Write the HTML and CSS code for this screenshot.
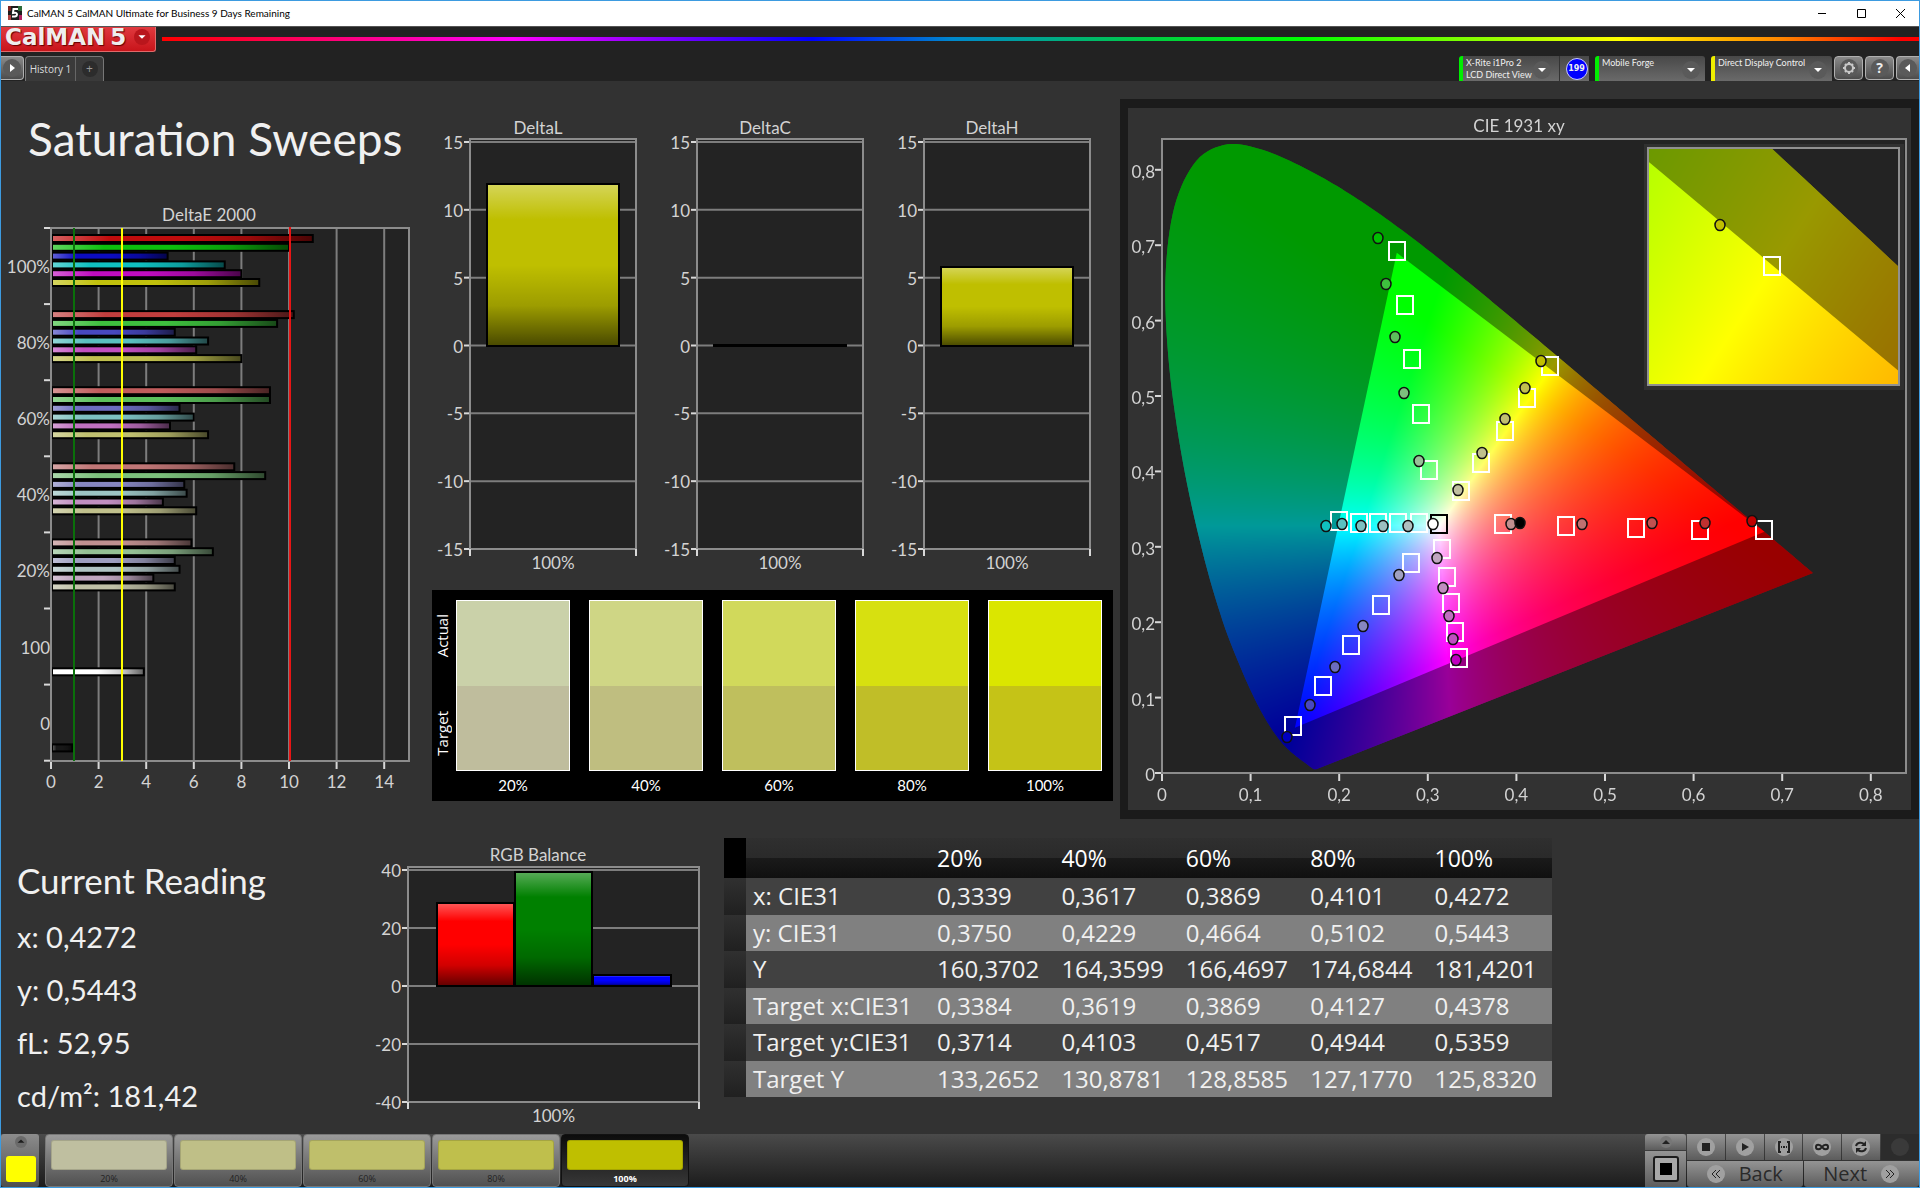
FILE: index.html
```html
<!DOCTYPE html>
<html lang="en">
<head>
<meta charset="utf-8">
<title>CalMAN 5 CalMAN Ultimate for Business 9 Days Remaining</title>
<link rel="stylesheet" href="styles.css">
</head>
<body>
<header class="titlebar">
  <svg class="app-icon" viewBox="0 0 14 14" aria-hidden="true">
    <rect width="14" height="14" fill="#1c1c1c"/>
    <path d="M0 0h3v5H0z" fill="#7a2020"/><path d="M10 0h4v5h-4z" fill="#2c6b3a"/><path d="M0 9h3v5H0z" fill="#b04040"/><path d="M11 9h3v5h-3z" fill="#b02060"/>
    <path d="M10 3H5.500L5 7q4-1 4 1.500T4 10.500" fill="none" stroke="#fff" stroke-width="2"/>
  </svg>
  <span class="window-title">CalMAN 5 CalMAN Ultimate for Business 9 Days Remaining</span>
  <div class="window-buttons">
    <button type="button" aria-label="Minimize"><svg viewBox="0 0 10 10"><path d="M1 5.500h8"/></svg></button>
    <button type="button" aria-label="Maximize"><svg viewBox="0 0 10 10"><path d="M1.500 1.500h8v8h-8z"/></svg></button>
    <button type="button" aria-label="Close"><svg viewBox="0 0 10 10"><path d="M1 1l9 9M10 1l-9 9"/></svg></button>
  </div>
</header>

<div class="brandbar">
  <button type="button" class="logo">CalMAN<span>5</span>
    <svg class="logo-arrow" viewBox="0 0 18 18" aria-hidden="true"><circle cx="9" cy="9" r="9" fill="#b9161c"/><path d="M5 7h8l-4 4z" fill="#fff"/></svg>
  </button>
  <div class="rainbow"></div>
</div>

<nav class="toolbar">
  <button type="button" class="tool play" aria-label="Run"><svg viewBox="0 0 18 18"><circle cx="9" cy="9" r="9"/><path d="M7 5v8l5-4z"/></svg></button>
  <div class="tabs">
    <button type="button" class="tab">History 1</button>
    <button type="button" class="tab add" aria-label="Add tab"><span>+</span></button>
  </div>
  <div class="devices">
    <button type="button" class="device green meter">
      <span class="device-name">X-Rite i1Pro 2<br>LCD Direct View</span>
      <svg class="drop" viewBox="0 0 18 18"><circle cx="9" cy="9" r="9"/><path d="M5 7h8l-4 4z"/></svg>
    </button>
    <button type="button" class="counter"><span>199</span></button>
    <button type="button" class="device green source">
      <span class="device-name">Mobile Forge</span>
      <svg class="drop" viewBox="0 0 18 18"><circle cx="9" cy="9" r="9"/><path d="M5 7h8l-4 4z"/></svg>
    </button>
    <button type="button" class="device yellow display">
      <span class="device-name">Direct Display Control</span>
      <svg class="drop" viewBox="0 0 18 18"><circle cx="9" cy="9" r="9"/><path d="M5 7h8l-4 4z"/></svg>
    </button>
  </div>
  <div class="tools">
    <button type="button" class="tool" aria-label="Settings"><svg viewBox="0 0 18 18"><circle cx="9" cy="9" r="9"/><g class="gear"><circle cx="9" cy="9" r="4"/><path d="M9 3v2M9 13v2M3 9h2M13 9h2M5 5l1 1M12 12l1 1M5 13l1-1M12 6l1-1"/></g></svg></button>
    <button type="button" class="tool help" aria-label="Help"><span>?</span></button>
    <button type="button" class="tool collapse" aria-label="Collapse"><svg viewBox="0 0 18 18"><circle cx="9" cy="9" r="9"/><path d="M11 5v8L6 9z"/></svg></button>
  </div>
</nav>

<main>
  <div class="upper">
    <section class="sweeps">
      <h1>Saturation Sweeps</h1>
      <svg id="delta-e" class="chart" viewBox="1 200 420 619" role="img" aria-label="DeltaE 2000"></svg>
    </section>
    <section class="deltas">
      <svg id="delta-lch" class="chart" viewBox="421 99 698 491" role="img" aria-label="DeltaL, DeltaC and DeltaH"></svg>
      <div class="compare">
        <div class="compare-side"><span>Actual</span><span>Target</span></div>
        <figure><div class="pair"><i class="a20"></i><i class="t20"></i></div><figcaption>20%</figcaption></figure>
        <figure><div class="pair"><i class="a40"></i><i class="t40"></i></div><figcaption>40%</figcaption></figure>
        <figure><div class="pair"><i class="a60"></i><i class="t60"></i></div><figcaption>60%</figcaption></figure>
        <figure><div class="pair"><i class="a80"></i><i class="t80"></i></div><figcaption>80%</figcaption></figure>
        <figure><div class="pair"><i class="a100"></i><i class="t100"></i></div><figcaption>100%</figcaption></figure>
      </div>
    </section>
    <section class="cie">
      <canvas id="cie-fill" width="783" height="702"></canvas>
      <svg id="cie-axes" class="chart" viewBox="1128 108 783 702" role="img" aria-label="CIE 1931 xy"></svg>
    </section>
  </div>

  <div class="lower">
    <section class="reading">
      <h2>Current Reading</h2>
      <p>x: 0,4272</p>
      <p>y: 0,5443</p>
      <p>fL: 52,95</p>
      <p>cd/m²: 181,42</p>
    </section>
    <section class="balance">
      <svg id="rgb" class="chart" viewBox="361 819 363 315" role="img" aria-label="RGB Balance"></svg>
    </section>
    <section class="results">
      <table>
        <thead><tr><td class="stub"></td><td></td><th scope="col">20%</th><th scope="col">40%</th><th scope="col">60%</th><th scope="col">80%</th><th scope="col">100%</th></tr></thead>
        <tbody>
          <tr><td class="stub"></td><th scope="row">x: CIE31</th><td>0,3339</td><td>0,3617</td><td>0,3869</td><td>0,4101</td><td>0,4272</td></tr>
          <tr><td class="stub"></td><th scope="row">y: CIE31</th><td>0,3750</td><td>0,4229</td><td>0,4664</td><td>0,5102</td><td>0,5443</td></tr>
          <tr><td class="stub"></td><th scope="row">Y</th><td>160,3702</td><td>164,3599</td><td>166,4697</td><td>174,6844</td><td>181,4201</td></tr>
          <tr><td class="stub"></td><th scope="row">Target x:CIE31</th><td>0,3384</td><td>0,3619</td><td>0,3869</td><td>0,4127</td><td>0,4378</td></tr>
          <tr><td class="stub"></td><th scope="row">Target y:CIE31</th><td>0,3714</td><td>0,4103</td><td>0,4517</td><td>0,4944</td><td>0,5359</td></tr>
          <tr><td class="stub"></td><th scope="row">Target Y</th><td>133,2652</td><td>130,8781</td><td>128,8585</td><td>127,1770</td><td>125,8320</td></tr>
        </tbody>
      </table>
    </section>
  </div>
</main>

<footer>
  <button type="button" class="current" aria-label="Current patch">
    <svg viewBox="0 0 14 14"><circle cx="7" cy="7" r="7" fill="#6a6a6a"/><path d="M3 8h8L7 4z" fill="#1c1c1c"/></svg>
    <i></i>
  </button>
  <div class="patches">
    <button type="button" class="patch"><i class="p20"></i>20%</button>
    <button type="button" class="patch"><i class="p40"></i>40%</button>
    <button type="button" class="patch"><i class="p60"></i>60%</button>
    <button type="button" class="patch"><i class="p80"></i>80%</button>
    <button type="button" class="patch active"><i class="p100"></i>100%</button>
  </div>
  <div class="pattern">
    <button type="button" class="up" aria-label="Expand"><svg viewBox="0 0 12 12"><circle cx="6" cy="6" r="6" fill="#777"/><path d="M2 8h8L6 4z" fill="#222"/></svg></button>
    <button type="button" class="window" aria-label="Pattern window"><svg viewBox="0 0 26 26"><rect x="1" y="1" width="24" height="24" rx="2" fill="#a8a8a8" stroke="#1c1c1c" stroke-width="2"/><rect x="7" y="7" width="12" height="12"/></svg></button>
  </div>
  <div class="transport">
    <div class="transport-row">
      <button type="button" aria-label="Stop"><svg viewBox="0 0 18 18"><circle cx="9" cy="9" r="9"/><path d="M5 5h8v8H5z"/></svg></button>
      <button type="button" aria-label="Play"><svg viewBox="0 0 18 18"><circle cx="9" cy="9" r="9"/><path d="M6 5v8l7-4z"/></svg></button>
      <button type="button" aria-label="Read range"><svg viewBox="0 0 18 18"><circle cx="9" cy="9" r="9"/><path class="line" d="M6 4H4v10h2M12 4h2v10h-2M6 9h1M8 9h2M11 9h1"/></svg></button>
      <button type="button" aria-label="Continuous"><svg viewBox="0 0 18 18"><circle cx="9" cy="9" r="9"/><path class="line" d="M9 9C7 6 3 6 3 9s4 3 6 0 6-3 6 0-4 3-6 0z"/></svg></button>
      <button type="button" aria-label="Refresh"><svg viewBox="0 0 18 18"><circle cx="9" cy="9" r="9"/><path class="line" d="M4 8c1-4 6-4 8-2M14 10c-1 4-6 4-8 2"/><path d="M14 3v5H9zM4 15v-5h5z"/></svg></button>
      <button type="button" class="off" aria-label="Idle"><svg viewBox="0 0 18 18"><circle cx="9" cy="9" r="9"/></svg></button>
    </div>
    <div class="transport-row wide">
      <button type="button"><svg viewBox="0 0 18 18"><circle cx="9" cy="9" r="9"/><path class="line thin" d="M9 5L5 9l4 4M13 5L9 9l4 4"/></svg>Back</button>
      <button type="button">Next<svg viewBox="0 0 18 18"><circle cx="9" cy="9" r="9"/><path class="line thin" d="M9 5l4 4-4 4M5 5l4 4-4 4"/></svg></button>
    </div>
  </div>
</footer>
<script src="charts.js"></script>
</body>
</html>
```
FILE: styles.css
```css
* { box-sizing: border-box; }
html { background: #323232; }
body {
  margin: 0;
  min-height: 100vh;
  display: flex;
  flex-direction: column;
  border: 1px solid #3d9be0;
  background: #323232;
  color: #f0f0f0;
  font-family: Lato, "Open Sans", sans-serif;
}
button {
  border: 0;
  padding: 0;
  margin: 0;
  background: none;
  color: inherit;
  font: inherit;
}
i { display: block; }
svg { display: block; flex: none; }

/* Window frame */
.titlebar {
  display: flex;
  align-items: center;
  height: 25px;
  padding: 0 0 2px 7px;
  gap: 5px;
  background: #fff;
  color: #000;
}
.app-icon { width: 14px; height: 14px; }
.window-title { font-size: 10px; line-height: 14px; }
.window-buttons { display: flex; margin-left: auto; }
.window-buttons button {
  display: flex;
  align-items: center;
  justify-content: center;
  width: 39px;
  height: 23px;
}
.window-buttons svg { width: 10px; height: 10px; fill: none; stroke: #000; overflow: visible; }

.brandbar { display: flex; align-items: flex-start; gap: 6px; height: 30px; background: #222; border-top: 1px solid #555; }
.logo {
  display: flex;
  align-items: center;
  gap: 5px;
  width: 155px;
  height: 25px;
  padding: 0 0 4px 4px;
  border-radius: 0 0 3px 0;
  border: solid #e06a6a;
  border-width: 0 1px 1px 0;
  background: linear-gradient(#e03a3f, #c8141a);
  color: #eee;
  font: bold 23px/20px "DejaVu Sans", sans-serif;
  text-shadow: 1px 1px 1px #600;
}
.logo-arrow { width: 16px; height: 16px; margin-left: 3px; }
.rainbow {
  flex: 1;
  height: 4px;
  margin-top: 10px;
  background: linear-gradient(90deg, #f00 0%, #f0a 14%, #f0f 20%, #00f 37%, #08c 45%, #0c4 56%, #0f0 65%, #9f0 76%, #ff0 83%, #f80 92%, #f00 99%);
}

.toolbar { display: flex; height: 25px; background: #222; }
.tool {
  display: flex;
  align-items: center;
  justify-content: center;
  width: 29px;
  height: 24px;
  border: 1px solid #b0b0b0;
  border-radius: 4px;
  background: linear-gradient(#8a8a8a, #4c4c4c);
}
.tool svg, .drop { width: 18px; height: 18px; fill: #fff; }
.tool circle, .drop circle { fill: #5a5a5a; }
.tool .gear circle { fill: none; }
.gear { fill: none; stroke: #c8c8c8; stroke-width: 2; }
.play, .collapse { width: 23px; border-left: 0; border-top-left-radius: 0; border-bottom-left-radius: 0; }
.help span {
  width: 18px;
  border-radius: 9px;
  background: #5a5a5a;
  font: bold 14px/18px "Open Sans", sans-serif;
  color: #eee;
}
.tabs { display: flex; margin-left: 1px; border: solid #777; border-width: 1px 1px 0; border-radius: 4px 4px 0 0; background: #3a3a3a; }
.tab { width: 49px; font: 10px/24px "Open Sans", sans-serif; color: #ddd; white-space: nowrap; }
.tab.add { display: flex; align-items: center; justify-content: center; width: 28px; border-left: 1px solid #666; color: #999; }
.tab.add span { width: 16px; border-radius: 8px; background: #2c2c2c; font-size: 12px; line-height: 16px; }
.devices { display: flex; margin-left: auto; margin-right: 2px; }
.device {
  display: flex;
  align-items: flex-start;
  justify-content: space-between;
  padding: 1px 5px 0 3px;
  border-left: 4px solid #0e0;
  border-radius: 3px 3px 0 0;
  background: linear-gradient(#484848, #6a6a6a);
  font-size: 9px;
  line-height: 12px;
  text-align: left;
  white-space: nowrap;
}
.device.yellow { border-color: #ee0; }
.drop { margin-top: 4px; }
.meter { width: 100px; padding-right: 8px; border-top-right-radius: 0; }
.source { width: 110px; margin-left: 6px; }
.display { width: 121px; margin-left: 6px; }
.counter { display: flex; align-items: center; justify-content: center; width: 30px; padding-left: 4px; border-left: 1px solid #333; background: linear-gradient(#484848, #6a6a6a); }
.counter span {
  width: 22px;
  border: 1px solid #ccf;
  border-radius: 11px;
  background: #00f;
  font: bold 8px/20px "DejaVu Sans", sans-serif;
  text-align: center;
}
.tools { display: flex; gap: 2px; }
.collapse { border: 1px solid #b0b0b0; border-right: 0; border-radius: 4px 0 0 4px; }

/* Workspace */
main { flex: 1; }
.upper { display: grid; grid-template-columns: minmax(0, 420fr) minmax(0, 698fr) minmax(0, 800fr); align-items: start; padding-top: 1px; }
.chart { width: 100%; height: auto; }
.chart text { font-family: Lato, "Open Sans", sans-serif; font-size: 17px; fill: #d3d3d3; }
h1 { margin: 0; height: 118px; padding: 25px 0 0 27px; font-weight: 400; font-size: 46px; line-height: 64px; white-space: nowrap; }
.deltas { padding-top: 17px; }
.compare { display: flex; gap: 19px; margin: 0 6px 0 11px; height: 211px; padding: 10px 11px 0 0; background: #000; }
.compare-side { display: flex; flex-direction: column; justify-content: space-between; align-items: center; width: 20px; height: 171px; margin-right: -15px; padding: 14px 0 15px; }
.compare-side span { writing-mode: vertical-rl; transform: rotate(180deg); font: 15px/20px "Open Sans", sans-serif; color: #fff; }
figure { flex: 1; margin: 0; text-align: center; }
figcaption { padding-top: 4px; font-size: 15px; line-height: 20px; color: #fff; }
.pair { height: 171px; border: 1px solid #fff; }
.pair i { height: 50%; }
.a20 { background: #cad1a9; } .t20 { background: #bfbd9d; }
.a40 { background: #cfd685; } .t40 { background: #bfbe80; }
.a60 { background: #d1d95b; } .t60 { background: #bfbf5d; }
.a80 { background: #d7e010; } .t80 { background: #c0be28; }
.a100 { background: #dbe600; } .t100 { background: #c5c317; }
.cie { display: grid; margin: 17px 0 0 1px; border: solid #1b1b1b; border-width: 9px 8px; }
.cie > * { grid-area: 1 / 1; width: 100%; }

.lower { display: grid; grid-template-columns: minmax(0, 360fr) minmax(0, 363fr) minmax(0, 1195fr); align-items: start; }
.reading { padding: 38px 0 0 16px; white-space: nowrap; }
h2 { margin: 0 0 7px; font-weight: 400; font-size: 35px; line-height: 46px; }
.reading p { margin: 0; font-size: 29px; line-height: 53px; }
.results { padding-top: 19px; }
table { width: 828px; height: 259px; table-layout: fixed; border-collapse: collapse; font: 24px/30px "Open Sans", sans-serif; white-space: nowrap; }
td, th { padding: 0 0 0 7px; font-weight: 400; text-align: left; }
td:nth-child(2), th:nth-child(2) { width: 184px; }
thead tr { height: 40px; }
thead td, thead th { background: linear-gradient(#2f2f2f, #2a2a2a 49%, #1a1a1a 51%, #101010); font-size: 23px; color: #fff; }
tbody tr { background: #414141; }
tbody tr:nth-child(even) { background: #808080; }
tbody .stub { background: linear-gradient(#303030, #202020); }
thead td.stub { width: 22px; padding: 0; background: #000; }

/* Bottom strip */
footer { display: flex; height: 53px; background: linear-gradient(#4a4a4a, #1c1c1c); }
.current {
  display: flex;
  flex-direction: column;
  align-items: center;
  justify-content: space-between;
  width: 38px;
  padding: 2px 0 5px 1px;
  border-radius: 3px;
  background: linear-gradient(#8c8c8c, #4e4e4e);
}
.current svg { width: 12px; height: 12px; }
.current i { width: 30px; height: 26px; border-radius: 3px; background: #ff0; }
.patches { display: flex; gap: 1px; margin-left: 6px; }
.patch {
  width: 128px;
  padding: 5px 5px 0;
  border: 1px solid #777;
  border-radius: 4px;
  background: linear-gradient(#9a9a9a, #505050);
  font: 9px/18px "Open Sans", sans-serif;
  color: #222;
}
.patch i { height: 30px; border: 1px solid #00000022; border-radius: 3px; }
.patch.active { border-color: #111; background: linear-gradient(#0c0c0c, #383838); color: #fff; font-weight: 700; }
.p20 { background: #bfbfa0; } .p40 { background: #bfbf87; } .p60 { background: #bfbf6b; } .p80 { background: #bfbf4c; } .p100 { background: #bfbf00; }
.pattern { display: flex; flex-direction: column; gap: 1px; width: 41px; margin-left: auto; }
.pattern button, .transport button { display: flex; align-items: center; justify-content: center; background: linear-gradient(#949494, #5c5c5c); }
.up { height: 16px; border-radius: 3px 3px 0 0; }
.up svg { width: 12px; height: 12px; }
.window { flex: 1; }
.window svg { width: 26px; height: 26px; }
.transport { display: flex; flex-direction: column; gap: 1px; width: 232px; margin-left: 1px; }
.transport-row { display: flex; flex: 1; gap: 1px; }
.transport-row button { flex: 1; color: #1c1c1c; }
.transport-row svg { width: 18px; height: 18px; fill: #222; }
.transport-row circle { fill: #a0a0a0; }
.transport-row .line { fill: none; stroke: #222; stroke-width: 2; }
.transport-row .thin { stroke-width: 1; }
.transport-row button.off { background: #2c2c2c; }
.transport-row .off circle { fill: #3a3a3a; }
.transport-row.wide button { gap: 14px; border-radius: 0 0 3px 3px; font: 20px/24px "Open Sans", sans-serif; color: #2a2a2a; }
```
FILE: charts.js
```js
const NS = 'http://www.w3.org/2000/svg';
const $ = id => document.getElementById(id);

function add(parent, tag, attrs, text) {
  const el = document.createElementNS(NS, tag);
  for (const k in attrs) el.setAttribute(k, attrs[k]);
  if (text !== undefined) el.textContent = text;
  parent.appendChild(el);
  return el;
}
const rect = (s, x, y, w, h, fill, extra) => add(s, 'rect', { x, y, width: w, height: h, fill, ...extra });
const line = (s, x1, y1, x2, y2, stroke, w = 2) => add(s, 'line', { x1, y1, x2, y2, stroke, 'stroke-width': w });
const label = (s, x, y, t, anchor = 'middle') => add(s, 'text', { x, y, 'text-anchor': anchor }, t);
const GRID = '#7d7d7d', AXIS = '#8c8c8c', TICK = '#d8d8d8', PLOT = '#232323';

/* Glossy shading laid over a flat bar colour */
function gloss(s, id, horizontal) {
  const g = add(add(s, 'defs', {}), 'linearGradient', { id, x1: 0, y1: 0, x2: horizontal ? 1 : 0, y2: horizontal ? 0 : 1 });
  [[0, '#fff', .35], [.22, '#fff', 0], [.5, '#000', 0], [.75, '#000', .18], [1, '#000', .62]].forEach(([o, c, a]) =>
    add(g, 'stop', { offset: o, 'stop-color': c, 'stop-opacity': a }));
}
function bar(s, x, y, w, h, color, id) {
  rect(s, x, y, w, h, color);
  rect(s, x, y, w, h, `url(#${id})`, { stroke: '#000', 'stroke-width': 2 });
}

/* DeltaE 2000 sweep bars */
(function () {
  const s = $('delta-e'), X = 51, Y = 228, R = 409, B = 761, step = 76.1, unit = 23.8;
  gloss(s, 'gloss-h', true);
  rect(s, X, Y, R - X, B - Y, PLOT);
  for (let v = 2; v <= 14; v += 2) line(s, X + v * unit, Y, X + v * unit, B, GRID);
  const groups = [
    ['100%', '#c00c0c 11 #0cc00c 10 #0c0cc0 4.9 #10c0c0 7.3 #c00cc0 8 #c0c00c 8.75'],
    ['80%', '#c03e3e 10.2 #3ec03e 9.5 #4848c0 5.2 #5ac0c0 6.6 #c04ec0 6.1 #c0c04e 8'],
    ['60%', '#c05c5c 9.2 #5cc05c 9.2 #6c6cc0 5.4 #7cc0c0 6 #c070c0 5 #c0c070 6.6'],
    ['40%', '#c07676 7.7 #7cc07c 9 #8686c0 5.6 #9cc4c4 5.7 #c08ec0 4.7 #c0c08c 6.1'],
    ['20%', '#c09090 5.9 #94c094 6.8 #9e9ec0 5.2 #b0c4c4 5.4 #c0a6c0 4.3 #c0c0a6 5.2'],
    ['100', '#ffffff 3.9'],
    ['0', '#181818 0.9']
  ];
  groups.forEach(([name, spec], g) => {
    const f = spec.split(' ');
    for (let i = 0; i * 2 < f.length; i++) {
      const slot = f.length === 2 ? 6 : i;
      bar(s, X + 1, Y + g * step + 7 + slot * 8.8, f[i * 2 + 1] * unit - 1, 7, f[i * 2], 'gloss-h');
    }
    label(s, 50, Y + g * step + 45, name, 'end');
  });
  for (let i = 0; i <= 7; i++) line(s, X - 7, Y + i * step, X, Y + i * step, TICK);
  rect(s, X, Y, R - X, B - Y, 'none', { stroke: AXIS, 'stroke-width': 2 });
  for (let v = 0; v <= 14; v += 2) {
    line(s, X + v * unit, B + 1, X + v * unit, B + 8, TICK);
    label(s, X + v * unit, 788, v);
  }
  line(s, 74, Y, 74, B, '#0a700a');
  line(s, 122, Y, 122, B, '#ff0');
  line(s, 290, Y - 1, 290, B, '#e81414');
  label(s, 209, 221, 'DeltaE 2000');
})();

/* Column chart with a symmetric value axis */
function columns(s, o) {
  rect(s, o.x, o.y - 3, o.w, o.bottom - o.y + 3, PLOT);
  const n = o.values.length - 1, step = (o.bottom - o.y) / n;
  o.values.forEach((v, i) => {
    const y = o.y + i * step;
    line(s, o.x, y, o.x + o.w, y, GRID);
    line(s, o.x - 6, y, o.x, y, TICK);
    label(s, o.x - 7, y + 7, v, 'end');
  });
  rect(s, o.x, o.y - 3, o.w, o.bottom - o.y + 3, 'none', { stroke: AXIS, 'stroke-width': 2 });
  line(s, o.x, o.bottom, o.x, o.bottom + 7, TICK);
  line(s, o.x + o.w, o.bottom, o.x + o.w, o.bottom + 7, TICK);
  o.bars.forEach(([x, w, top, color]) => bar(s, x, top, w, o.zero - top, color, o.gloss));
  label(s, o.titleX, o.titleY, o.title);
  label(s, o.x + o.w / 2, o.bottom + 20, '100%');
}
(function () {
  const s = $('delta-lch'), values = ['15', '10', '5', '0', '-5', '-10', '-15'];
  gloss(s, 'gloss-v', false);
  [['DeltaL', 470, 184], ['DeltaC', 697, 345], ['DeltaH', 924, 267]].forEach(([title, x, top]) =>
    columns(s, { x, y: 142, w: 166, bottom: 549, zero: 346, values, title, titleX: x + 68, titleY: 134, gloss: 'gloss-v', bars: [[x + 17, 132, top, '#bfbf00']] }));
})();
(function () {
  const s = $('rgb');
  gloss(s, 'gloss-rgb', false);
  columns(s, {
    x: 408, y: 870, w: 291, bottom: 1102, zero: 986, values: ['40', '20', '0', '-20', '-40'],
    title: 'RGB Balance', titleX: 538, titleY: 861, gloss: 'gloss-rgb',
    bars: [[437, 77, 903, '#f00'], [515, 77, 872, '#008000'], [593, 78, 975, '#00f']]
  });
})();

/* CIE 1931 chromaticity diagram */
const LOCUS = [.1741, .005, .1714, .0051, .1689, .0069, .1644, .0109, .1566, .0177, .151, .0227, .144, .0297, .1355, .0399, .1241, .0578,
  .1096, .0868, .0913, .1327, .0687, .2007, .0454, .295, .0235, .4127, .0082, .5384, .0039, .6548, .0139, .7502, .0389, .812, .0743, .8338,
  .1142, .8262, .1547, .8059, .1929, .7816, .2296, .7543, .2658, .7243, .3016, .6923, .3373, .6589, .3731, .6245, .4087, .5896, .4441, .5547,
  .4788, .5202, .5125, .4866, .5448, .4544, .5752, .4242, .6029, .3965, .627, .3725, .6482, .3514, .6658, .334, .6915, .3083, .7079, .292,
  .719, .2809, .7347, .2653];
const GAMUT = [.68, .32, .265, .69, .15, .06];

/* Catmull-Rom interpolation of the tabulated locus */
function smooth(p) {
  const n = p.length / 2, at = (i, k) => p[Math.min(n - 1, Math.max(0, i)) * 2 + k], out = [];
  for (let i = 0; i < n - 1; i++) for (let t = 0; t < 1; t += .125) for (let k = 0; k < 2; k++) {
    const a = at(i - 1, k), b = at(i, k), c = at(i + 1, k), d = at(i + 2, k);
    out.push(.5 * (2 * b + (c - a) * t + (2 * a - 5 * b + 4 * c - d) * t * t + (3 * b - a - 3 * c + d) * t * t * t));
  }
  out.push(at(n - 1, 0), at(n - 1, 1));
  return out;
}

/* Linear sRGB components, clipped at zero and scaled so the largest is 1 */
const toRGB = (x, y, z) => [
  3.2406 * x - 1.5372 * y - .4986 * z,
  -.9689 * x + 1.8758 * y + .0415 * z,
  .0557 * x - .204 * y + 1.057 * z
];
function chroma(x, y) {
  const v = toRGB(x, y, 1 - x - y).map(k => Math.max(0, k)), m = Math.max(...v);
  return v.map(k => 255 * k / m);
}
function paint(ctx, box, px, py, toX, toY) {
  const layer = document.createElement('canvas');
  layer.width = box.w; layer.height = box.h;
  const lc = layer.getContext('2d'), img = lc.createImageData(box.w, box.h);
  for (let j = 0; j < box.h; j++) for (let i = 0; i < box.w; i++) {
    const c = chroma(toX(box.x + i), toY(box.y + j)), k = (j * box.w + i) * 4;
    img.data[k] = c[0]; img.data[k + 1] = c[1]; img.data[k + 2] = c[2]; img.data[k + 3] = 255;
  }
  lc.putImageData(img, 0, 0);
  const clip = pts => {
    ctx.save();
    ctx.beginPath(); ctx.rect(box.x, box.y, box.w, box.h); ctx.clip();
    ctx.beginPath();
    for (let i = 0; i < pts.length; i += 2) ctx.lineTo(px(pts[i]), py(pts[i + 1]));
    ctx.closePath(); ctx.clip();
    ctx.drawImage(layer, box.x, box.y);
  };
  ctx.fillStyle = PLOT; ctx.fillRect(box.x, box.y, box.w, box.h);
  clip(smooth(LOCUS));
  ctx.fillStyle = 'rgba(0,0,0,.4)'; ctx.fillRect(box.x, box.y, box.w, box.h);
  ctx.restore();
  clip(GAMUT);
  ctx.restore();
}
(function () {
  const ctx = $('cie-fill').getContext('2d');
  const ox = 34, oy = 665;
  paint(ctx, { x: ox, y: 30, w: 744, h: 635 }, x => ox + x * 886, y => oy - y * 754, p => (p - ox) / 886, p => (oy - p) / 754);
  ctx.fillStyle = '#303030'; ctx.fillRect(516, 36, 260, 246);
  paint(ctx, { x: 520, y: 40, w: 251, h: 237 }, x => 645 + (x - .4378) * 4950, y => 158 - (y - .5359) * 4650,
    p => .4378 + (p - 645) / 4950, p => .5359 - (p - 158) / 4650);

  const s = $('cie-axes');
  rect(s, 1162, 139, 744, 634, 'none', { stroke: AXIS, 'stroke-width': 2 });
  rect(s, 1648, 148, 251, 237, 'none', { stroke: '#909090', 'stroke-width': 2 });
  for (let i = 0; i <= 8; i++) {
    const x = 1162 + i * 88.6, y = 773 - i * 75.4, t = i ? '0,' + i : '0';
    line(s, x, 774, x, 781, TICK);
    line(s, 1155, y, 1161, y, TICK);
    label(s, x, 801, t);
    label(s, 1155, y + 8, t, 'end');
  }
  label(s, 1519, 132, 'CIE 1931 xy');

  const square = (x, y, c = '#fff') => rect(s, x - 8, y - 9, 16, 18, 'none', { stroke: c, 'stroke-width': 2 });
  const dot = (x, y, fill) => add(s, 'ellipse', { cx: x, cy: y, rx: 5, ry: 5.5, fill, stroke: '#111', 'stroke-width': 1.5 });
  [1503, 524, 1566, 526, 1636, 528, 1700, 530, 1764, 530, 1397, 251, 1405, 305, 1412, 359, 1421, 414, 1429, 470,
    1550, 366, 1527, 398, 1505, 431, 1481, 463, 1461, 491, 1339, 521, 1359, 523, 1378, 523, 1398, 523, 1419, 523,
    1442, 549, 1447, 577, 1451, 603, 1455, 632, 1459, 658, 1411, 563, 1381, 605, 1351, 645, 1323, 686, 1293, 726, 1772, 266]
    .forEach((x, i, a) => i % 2 || square(x, a[i + 1]));
  square(1439, 524, '#000');
  [[1511, 524, '#c09090'], [1520, 523, '#000'], [1582, 524, '#c07070'], [1652, 523, '#c05050'], [1705, 523, '#c03030'], [1752, 521, '#c00000'],
    [1378, 238, '#00c000'], [1386, 284, '#3ec03e'], [1395, 337, '#5cc05c'], [1404, 393, '#7cc07c'], [1419, 461, '#98c098'],
    [1541, 361, '#c0c000'], [1525, 388, '#c0c04e'], [1505, 419, '#c0c070'], [1482, 453, '#c0c08c'], [1458, 490, '#c0c0a0'],
    [1326, 526, '#10c0c0'], [1342, 524, '#5ac0c0'], [1361, 526, '#7cc0c0'], [1383, 526, '#9cc0c0'], [1408, 526, '#b0c0c0'], [1433, 524, '#fff'],
    [1437, 558, '#c0a6c0'], [1443, 588, '#c08ec0'], [1449, 616, '#c070c0'], [1453, 639, '#c04ec0'], [1456, 660, '#c000c0'],
    [1399, 575, '#a0a0c0'], [1363, 626, '#8686c0'], [1335, 667, '#6c6cc0'], [1310, 705, '#4848c0'], [1287, 737, '#0000c0'],
    [1720, 225, '#c0c000']].forEach(d => dot(...d));
})();
```
